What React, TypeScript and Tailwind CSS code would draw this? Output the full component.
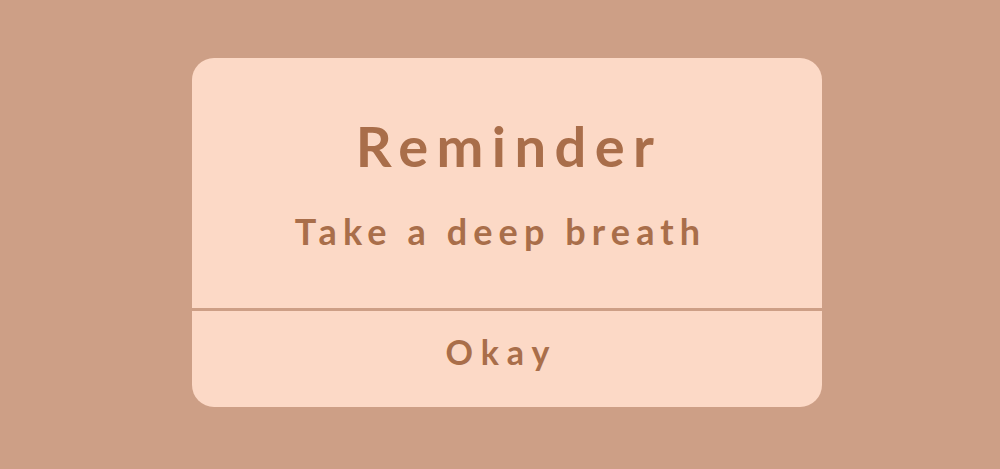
export default function App() {
  return (
    <div
      className="w-[1000px] h-[469px] bg-[#cd9f86] pl-[192px] pt-[58px]"
      style={{ fontFamily: "Lato, 'Noto Sans', sans-serif" }}
    >
      <div className="w-[630px] h-[349px] rounded-[22px] bg-[#fcd9c6] flex flex-col overflow-hidden">
        <div className="h-[250px] flex flex-col items-center text-[#a96e4a] font-bold">
          <div className="mt-[54px] text-[56px] leading-[68px] tracking-[8.4px] pl-[4px]">Reminder</div>
          <div className="mt-[29px] text-[36px] leading-[44px] tracking-[6.1px] pr-[13px]">Take a deep breath</div>
        </div>
        <div className="h-[3px] bg-[#cd9f86]" />
        <div className="flex-1 flex items-center justify-center text-[#a96e4a] font-bold text-[34px] tracking-[8px] pr-[11px] pb-[15px]">
          Okay
        </div>
      </div>
    </div>
  );
}
